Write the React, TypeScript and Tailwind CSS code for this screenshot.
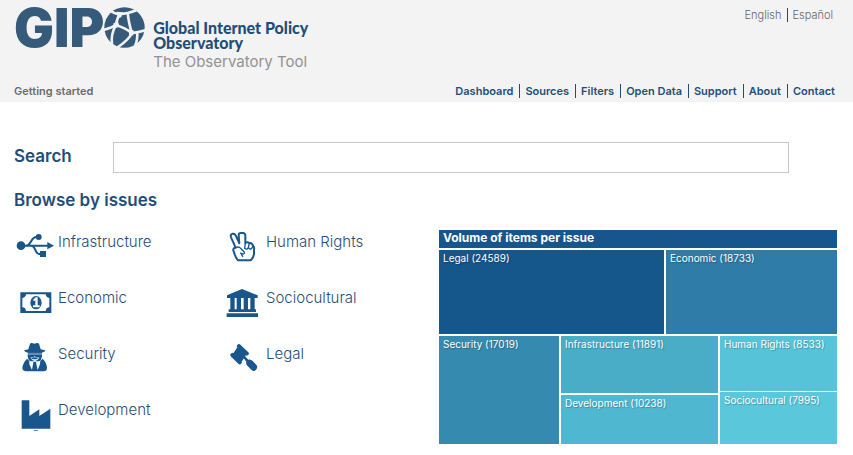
import type { ReactNode } from "react";

const navLinks = ["Dashboard", "Sources", "Filters", "Open Data", "Support", "About", "Contact"];

function Icon({ children }: { children: ReactNode }) {
  return (
    <svg viewBox="0 0 114 96" aria-hidden="true" className="w-[38px] h-8 shrink-0 overflow-visible fill-[#18568c]">
      {children}
    </svg>
  );
}

function UsbIcon() {
  return (
    <Icon>
      <circle cx="15" cy="47" r="13" />
      <circle cx="68" cy="21" r="9" />
      <rect x="72" y="63" width="18" height="18" />
      <path d="M94 36 114 47 94 58z" />
      <path d="M17 47H100M30 47C47 47 43 21 62 21H68M46 47C60 47 55 72 70 72H80" fill="none" stroke="#18568c" strokeWidth="6" />
    </Icon>
  );
}

function MoneyIcon() {
  return (
    <Icon>
      <path fillRule="evenodd" d="M13 19H106V81H13zM30 25Q29 35 19 36V64Q29 65 30 75H89Q90 65 100 64V36Q90 35 89 25z" />
      <ellipse cx="60" cy="50" rx="17" ry="20" />
      <path d="M51 41 59 34H65V58H71V64H51V58H58V43L54 46z" fill="#fff" />
    </Icon>
  );
}

function SpyIcon() {
  return (
    <Icon>
      <path d="M37 22 42 5Q46 1 51 4Q55 6 60 4Q65 1 69 5L74 22 87 25Q88 31 76 32H38Q24 30 25 25z" />
      <path d="M35 31H78V42Q76 56 69 58H44Q37 56 35 42z" />
      <path d="M33 50Q41 60 56 60Q72 60 80 50Q92 62 93 78Q92 88 83 88H31Q20 88 19 78Q21 62 33 50z" />
      <path d="M40 56 52 61 48 84 40 67zM73 56 60 61 65 84 72 67z" fill="#fff" />
      <path d="M43 46Q50 48 56 43Q62 48 70 46Q67 55 56 57Q46 55 43 46z" fill="#fff" />
      <path d="M46 49Q56 43 66 49L62 52H50z" />
      <path d="M32 36H80" fill="none" stroke="#fff" strokeWidth="2" />
    </Icon>
  );
}

function FactoryIcon() {
  return (
    <Icon>
      <path d="M17 7H40V54L70 34V54L103 32V92H17z" />
      <path d="M52 97H67L64 99H55z" />
    </Icon>
  );
}

function PeaceIcon() {
  return (
    <Icon>
      <g fill="#fff" stroke="#18568c" strokeWidth="6" strokeLinejoin="round" strokeLinecap="round">
        <path d="M35 53 21 22Q18 13 26 11Q33 10 36 18L46 40 44 15Q44 9 51 9H58Q64 10 64 17V39Q70 34 76 39Q84 38 87 47Q92 51 90 59V72Q88 85 80 91H42Q35 84 32 73L28 61Q27 53 35 53z" />
        <path d="M35 53Q44 48 51 56L60 65Q63 70 58 72L50 69 56 79M64 39 62 55Q69 61 73 53L76 39M74 54Q82 61 85 52L87 47" fill="none" strokeWidth="4" />
      </g>
    </Icon>
  );
}

function BankIcon() {
  return (
    <Icon>
      <path d="M54 9 101 28V36H9V28zM19 36H32V70H19zM38 36H51V70H38zM59 36H72V70H59zM79 36H92V70H79zM14 70H96V78H14zM8 82H102V93H8z" />
    </Icon>
  );
}

function GavelIcon() {
  return (
    <Icon>
      <path d="M38 12 42 7Q46 5 50 9L73 31Q77 35 73 39L68 41 66 39 53 59 54 61 51 66Q47 69 43 65L20 43Q17 39 20 35L25 32 28 34 40 16z" />
      <path d="M57 46 62 41 73 53Q80 51 86 57L98 70Q102 76 97 82L93 86Q88 89 83 84L70 71Q65 66 67 59z" />
    </Icon>
  );
}

const issues = [
  { name: "Infrastructure", icon: <UsbIcon /> },
  { name: "Human Rights", icon: <PeaceIcon /> },
  { name: "Economic", icon: <MoneyIcon /> },
  { name: "Sociocultural", icon: <BankIcon /> },
  { name: "Security", icon: <SpyIcon /> },
  { name: "Legal", icon: <GavelIcon /> },
  { name: "Development", icon: <FactoryIcon /> },
];

function Globe() {
  return (
    <svg viewBox="24 22 124 124" aria-hidden="true" className="size-[41px] shrink-0">
      <circle cx="86" cy="84" r="61" fill="#355a7a" />
      <g fill="none" stroke="#f3f3f3" strokeWidth="8">
        <path d="M42 30Q54 44 72 43Q90 44 122 32" />
        <path d="M72 43Q63 56 60 77Q48 84 22 92M60 77Q88 84 108 101Q126 99 150 92" />
        <path d="M96 42Q98 66 108 101Q100 121 62 146" />
        <path d="M60 77Q44 104 48 136M124 96Q127 118 118 140" />
      </g>
      <path d="M62 36 82 38 76 53 66 55zM52 72 66 66 72 82 54 86zM99 92 114 92 112 108 100 108z" fill="#f3f3f3" />
    </svg>
  );
}

function Cell({ label, color }: { label: string; color: string }) {
  return (
    <a href="#" className={`block px-1 pt-0.5 text-[10px] leading-3 text-white [text-shadow:1px_1px_1px_#0004] ${color}`}>
      {label}
    </a>
  );
}

export default function App() {
  return (
    <div className="bg-white text-[#1f4e79] font-[Inter,sans-serif]">
      <header className="bg-[#f3f3f3] pl-[14px] pr-[18px] pb-1">
        <div className="flex items-start justify-between h-20">
          <a href="#" className="flex items-start">
            <span className="-mt-1 whitespace-nowrap text-[53px] leading-[65px] text-[#355a7a] font-black font-[Inter,sans-serif]">GIP</span>
            <span className="pt-[7px]">
              <Globe />
            </span>
            <span className="pl-2 pt-5 whitespace-nowrap text-[16px] leading-[15px] text-[#1f4e79] font-black font-[Lato,sans-serif]">
              <span className="block">Global Internet Policy</span>
              <span className="block">Observatory</span>
              <span className="block pt-1 text-[15px] leading-4 font-normal text-[#929292] font-[Inter,sans-serif]">
                The Observatory Tool
              </span>
            </span>
          </a>
          <nav aria-label="Language" className="flex pt-2 pr-0.5 text-[11px] leading-[14px] font-light text-[#666]">
            <a href="#" className="pr-1.5">English</a>
            <a href="#" className="border-l border-[#1f4e79] pl-1">Español</a>
          </nav>
        </div>
        <div className="flex items-center justify-between pt-1 text-[11px] leading-[14px] font-semibold">
          <a href="#" className="text-[#6b6b6b]">Getting started</a>
          <nav aria-label="Main" className="flex">
            {navLinks.map((link) => (
              <a key={link} href="#" className="border-l border-[#1f4e79] pl-[5px] pr-1.5 first:border-l-0 last:pr-0">
                {link}
              </a>
            ))}
          </nav>
        </div>
      </header>

      <main className="pl-[14px] pr-4 pt-10">
        <form className="flex items-center pr-12">
          <label htmlFor="search" className="w-[99px] pb-1 text-[17px] leading-6 font-semibold">Search</label>
          <input id="search" type="text" className="h-[31px] min-w-0 flex-1 border border-[#c8c8c8] bg-white px-2" />
        </form>

        <h2 className="pt-[15px] text-[17px] leading-6 font-semibold">Browse by issues</h2>

        <div className="flex pt-[18px]">
          <ul className="grid w-[425px] grid-cols-[208px_1fr] auto-rows-[56px]">
            {issues.map((issue) => (
              <li key={issue.name} className="pl-0.5">
                <a href="#" className="flex items-start gap-1 text-[15px] leading-6 font-light text-[#1f4e79]">
                  {issue.icon}
                  {issue.name}
                </a>
              </li>
            ))}
          </ul>

          <section className="flex-1 min-w-0">
            <h3 className="h-[18px] bg-[#17568c] px-1 text-[12px] leading-4 font-bold text-white">Volume of items per issue</h3>
            <div className="mt-0.5 grid h-[84px] grid-cols-[225fr_171fr] gap-0.5">
              <Cell label="Legal (24589)" color="bg-[#15568b]" />
              <Cell label="Economic (18733)" color="bg-[#2e7ca7]" />
            </div>
            <div className="mt-0.5 grid h-[108px] grid-cols-[120fr_157fr_117fr] gap-0.5">
              <Cell label="Security (17019)" color="bg-[#358aaf]" />
              <div className="grid grid-rows-[57fr_49fr] gap-0.5">
                <Cell label="Infrastructure (11891)" color="bg-[#49adc8]" />
                <Cell label="Development (10238)" color="bg-[#50b7d0]" />
              </div>
              <div className="grid grid-rows-[55fr_52fr] gap-px">
                <Cell label="Human Rights (8533)" color="bg-[#57c3d8]" />
                <Cell label="Sociocultural (7995)" color="bg-[#5ac8da]" />
              </div>
            </div>
          </section>
        </div>
      </main>
    </div>
  );
}
